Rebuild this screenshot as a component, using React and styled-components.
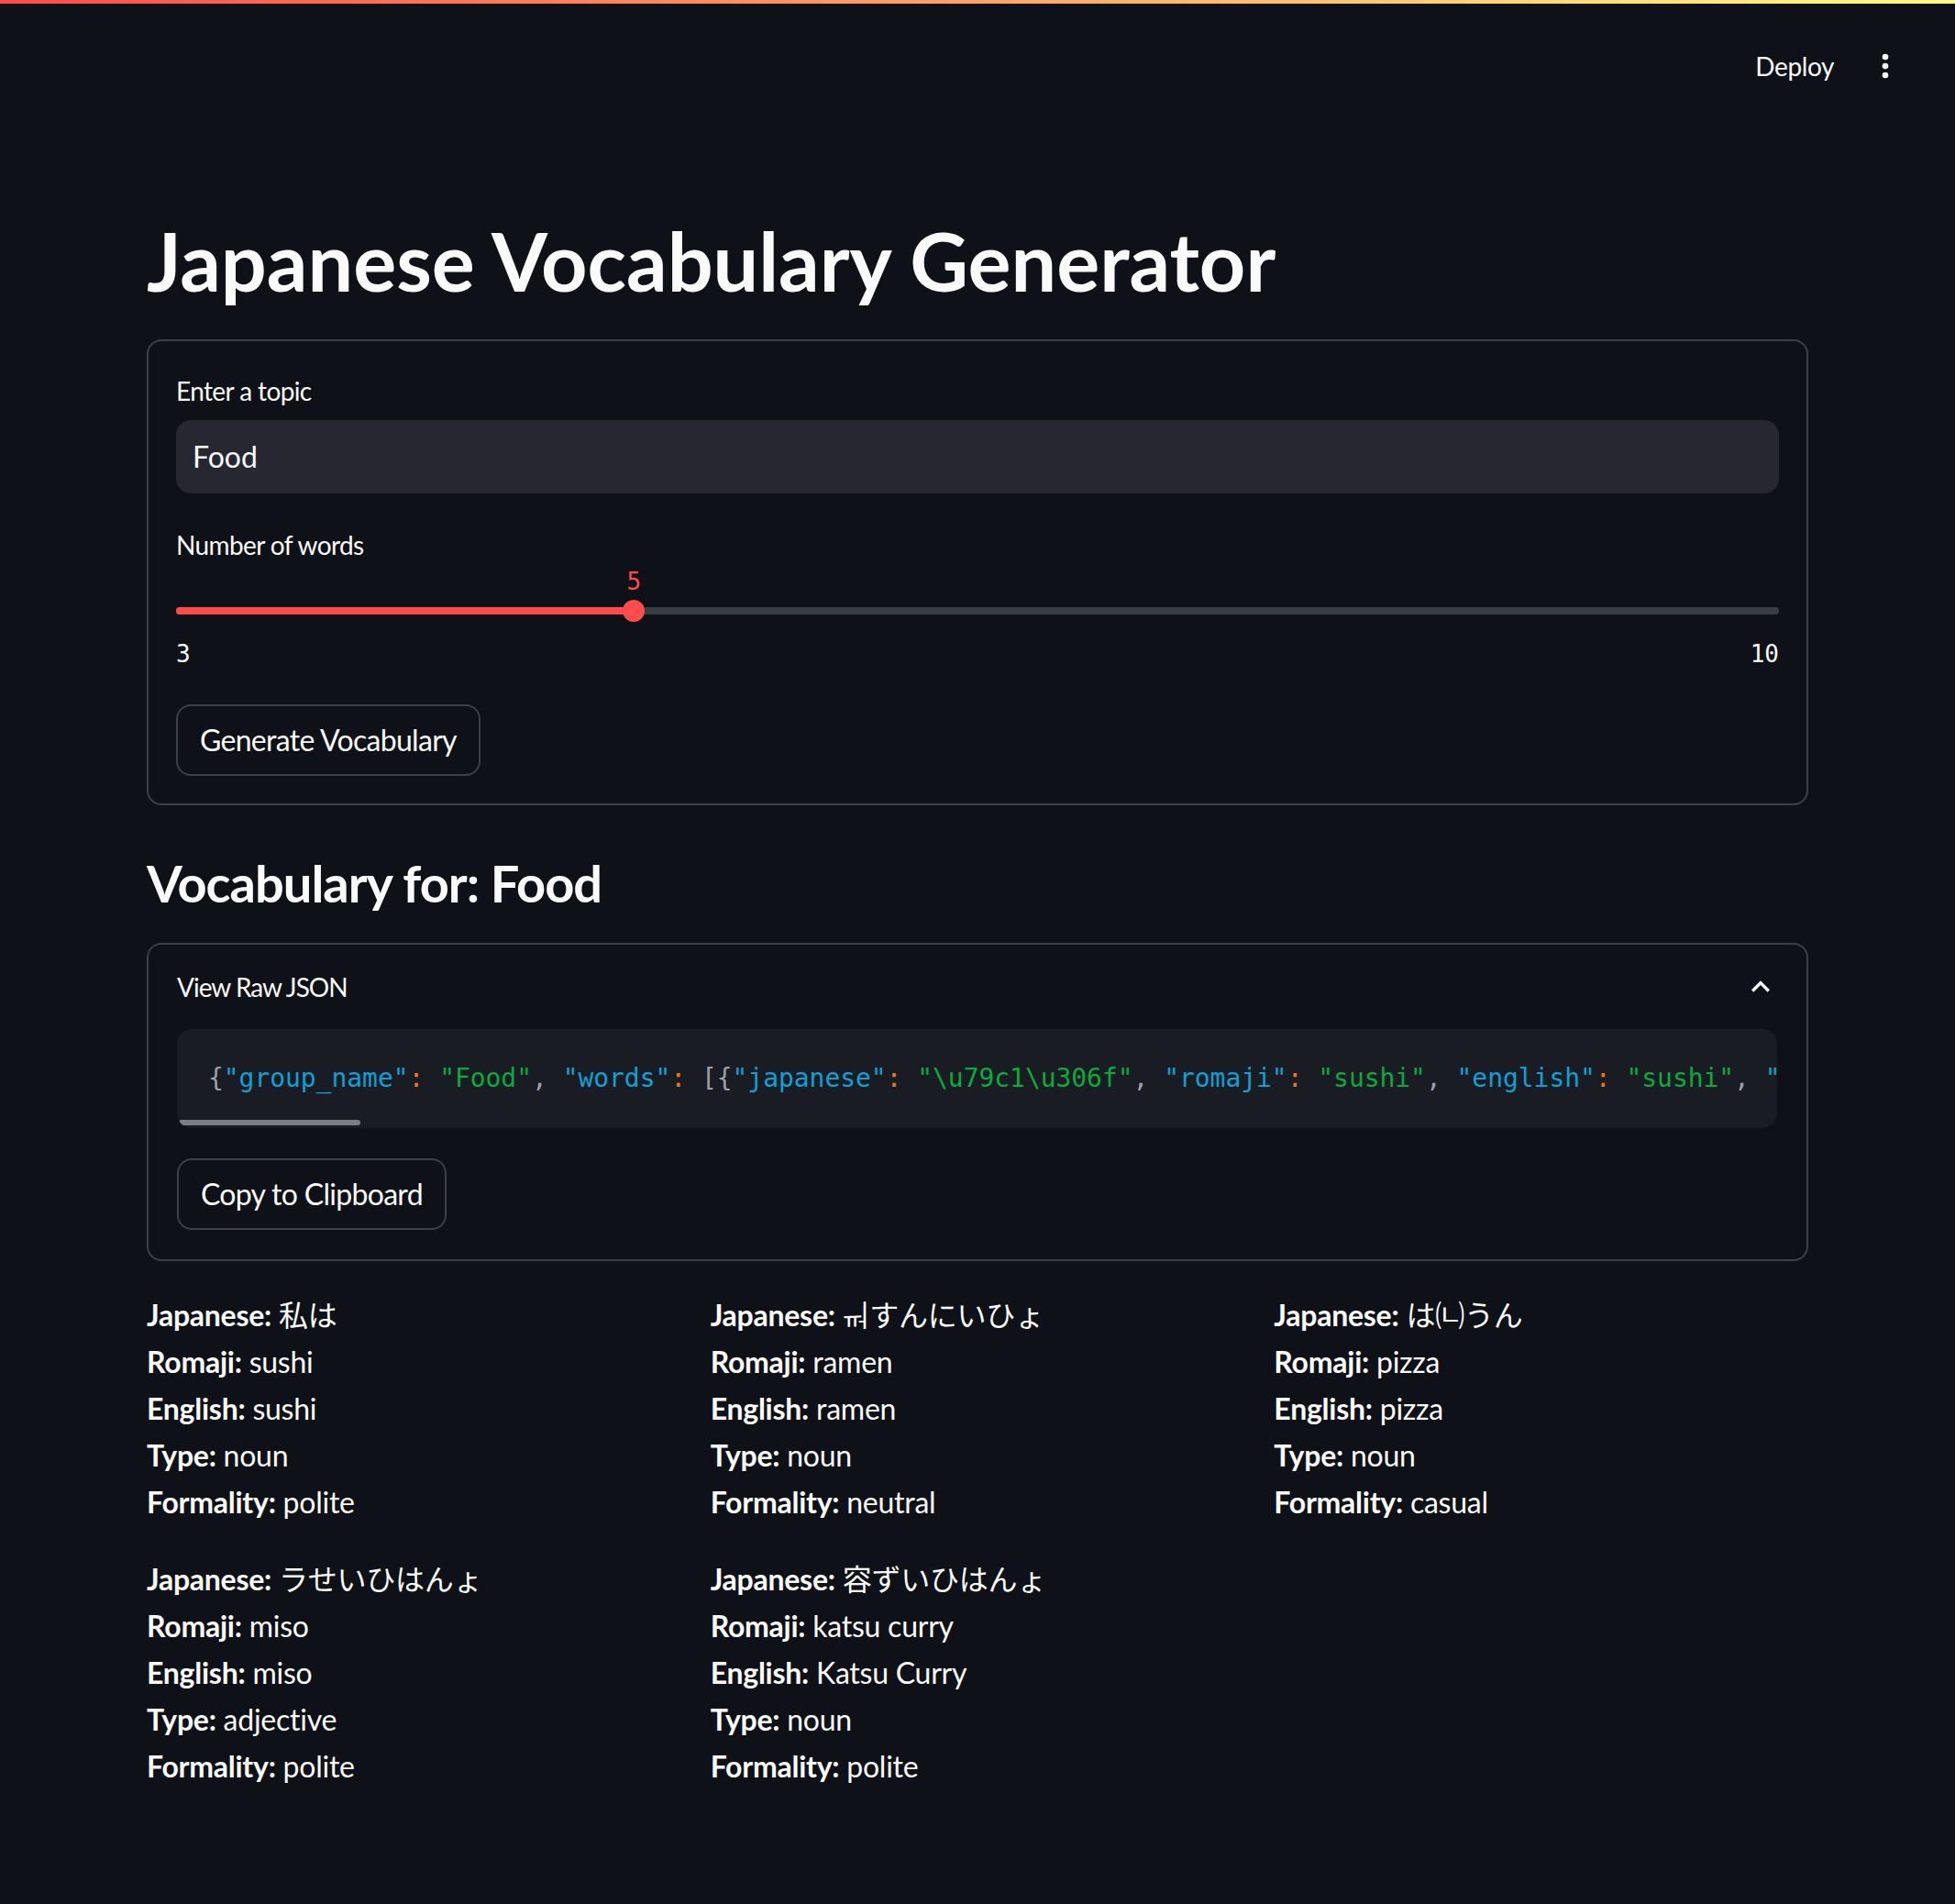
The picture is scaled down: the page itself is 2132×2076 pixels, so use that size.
import React from 'react'
import styled, { createGlobalStyle } from 'styled-components'

const GlobalStyle = createGlobalStyle`
  * { box-sizing: border-box; }
  html, body {
    margin: 0;
    padding: 0;
    background: #0e1117;
  }
  body {
    color: #fafafa;
    font-family: "Lato", "Noto Sans CJK JP", "Noto Sans CJK KR", sans-serif;
    -webkit-font-smoothing: antialiased;
  }
`

const vocab = {
  group_name: 'Food',
  words: [
    { japanese: '私は', romaji: 'sushi', english: 'sushi', type: 'noun', formality: 'polite' },
    { japanese: '\u115f\u118fすんにいひょ', romaji: 'ramen', english: 'ramen', type: 'noun', formality: 'neutral' },
    { japanese: 'は\u3201うん', romaji: 'pizza', english: 'pizza', type: 'noun', formality: 'casual' },
    { japanese: 'ラせいひはんょ', romaji: 'miso', english: 'miso', type: 'adjective', formality: 'polite' },
    { japanese: '容ずいひはんょ', romaji: 'katsu curry', english: 'Katsu Curry', type: 'noun', formality: 'polite' },
  ],
}

// python json.dumps style: ascii escapes, ", " and ": " separators
const pyEscape = (s) =>
  s.replace(/[^\x20-\x7e]/g, (ch) => '\\u' + ch.charCodeAt(0).toString(16).padStart(4, '0'))

const toTokens = (value, out) => {
  if (Array.isArray(value)) {
    out.push(['[', 'p'])
    value.forEach((v, i) => {
      if (i) out.push([', ', 'p'])
      toTokens(v, out)
    })
    out.push([']', 'p'])
  } else if (typeof value === 'object') {
    out.push(['{', 'p'])
    Object.entries(value).forEach(([k, v], i) => {
      if (i) out.push([', ', 'p'])
      out.push([`"${k}"`, 'k'])
      out.push([':', 'o'])
      out.push([' ', 'p'])
      toTokens(v, out)
    })
    out.push(['}', 'p'])
  } else {
    out.push([`"${pyEscape(String(value))}"`, 's'])
  }
  return out
}

// the raw json keeps the original single jamo, without the display filler
const rawVocab = {
  ...vocab,
  words: vocab.words.map((w) => ({ ...w, japanese: w.japanese.replace('\u115f', '') })),
}

const tokenColors = {
  p: '#9ca0ab',
  k: '#0ea0d6',
  s: '#09ab3b',
  o: '#f0761f',
}

const DecorationBar = styled.div`
  height: 4px;
  background: linear-gradient(90deg, #ff4b4b, #fffd80);
`

const Header = styled.header`
  height: 136px;
  display: flex;
  align-items: center;
  justify-content: flex-end;
  padding-right: 56px;
`

const DeployButton = styled.button`
  height: 64px;
  padding: 0 24px;
  margin-right: 12px;
  background: transparent;
  border: none;
  color: #fafafa;
  font-family: inherit;
  font-size: 28px;
  letter-spacing: -0.4px;
  cursor: pointer;
`

const IconButton = styled.button`
  width: 40px;
  height: 40px;
  padding: 0;
  display: flex;
  align-items: center;
  justify-content: center;
  background: transparent;
  border: none;
  color: #fafafa;
  cursor: pointer;
`

const Main = styled.main`
  padding: 52px 160px 120px;
`

const Title = styled.h1`
  margin: 0;
  padding: 40px 0 32px;
  font-size: 88px;
  line-height: 1.2;
  font-weight: 700;
`

const FormBox = styled.form`
  display: flex;
  flex-direction: column;
  align-items: flex-start;
  gap: 32px;
  padding: 30px;
  border: 2px solid rgba(250, 250, 250, 0.2);
  border-radius: 16px;
`

const Field = styled.div`
  width: 100%;
  display: flex;
  flex-direction: column;
`

const Label = styled.label`
  height: 48px;
  line-height: 48px;
  font-size: 28px;
  letter-spacing: -0.6px;
  margin-bottom: ${(p) => (p.$tight ? 0 : 8)}px;
`

const TextInput = styled.input`
  height: 80px;
  width: 100%;
  padding: 0 16px;
  border: 2px solid transparent;
  border-radius: 16px;
  background: #262730;
  color: #fafafa;
  font-family: inherit;
  font-size: 32px;
  outline: none;
`

const ValueRow = styled.div`
  position: relative;
  height: 32px;
`

const ThumbValue = styled.span`
  position: absolute;
  top: 0;
  transform: translateX(-50%);
  line-height: 32px;
  font-family: "DejaVu Sans Mono", monospace;
  font-size: 26px;
  color: #ff4b4b;
`

const TrackRow = styled.div`
  height: 32px;
  display: flex;
  align-items: center;
`

const Track = styled.div`
  position: relative;
  width: 100%;
  height: 8px;
  border-radius: 4px;
  background: #383c44;
`

const TrackFill = styled.div`
  height: 100%;
  border-radius: 4px;
  background: #ff4b4b;
`

const Thumb = styled.div`
  position: absolute;
  top: 50%;
  width: 24px;
  height: 24px;
  border-radius: 50%;
  background: #ff4b4b;
  transform: translate(-50%, -50%);
`

const TickBar = styled.div`
  margin-top: 9px;
  height: 45px;
  display: flex;
  align-items: center;
  justify-content: space-between;
  font-family: "DejaVu Sans Mono", monospace;
  font-size: 26px;
`

const Button = styled.button`
  height: 78px;
  padding: 0 24px;
  border: 2px solid rgba(250, 250, 250, 0.2);
  border-radius: 16px;
  background: #0e1117;
  color: #fafafa;
  font-family: inherit;
  font-size: 32px;
  letter-spacing: -0.7px;
  cursor: pointer;
`

const SubHeading = styled.h3`
  margin: 32px 0 0;
  padding: 19px 0 32px;
  font-size: 56px;
  line-height: 67px;
  font-weight: 700;
  letter-spacing: -1px;
`

const Expander = styled.details`
  border: 2px solid rgba(250, 250, 250, 0.2);
  border-radius: 16px;
`

const Summary = styled.summary`
  height: 92px;
  padding: 0 30px 0 31px;
  display: flex;
  align-items: center;
  justify-content: space-between;
  list-style: none;
  font-size: 28px;
  letter-spacing: -1px;
  cursor: pointer;
  &::-webkit-details-marker { display: none; }
`

const ExpanderBody = styled.div`
  display: flex;
  flex-direction: column;
  align-items: flex-start;
  gap: 33px;
  padding: 0 32px 32px 31px;
`

const CodeBlock = styled.pre`
  position: relative;
  width: 100%;
  height: 108px;
  margin: 0;
  padding: 0 34px;
  overflow: hidden;
  border-radius: 16px;
  background: #1a1c24;
  font-family: "DejaVu Sans Mono", monospace;
  font-size: 28px;
  letter-spacing: -0.05px;
  line-height: 108px;
  white-space: pre;
`

const Token = styled.span`
  color: ${(p) => tokenColors[p.$kind]};
`

const ScrollThumb = styled.div`
  position: absolute;
  left: 2px;
  bottom: 3px;
  width: 198px;
  height: 6px;
  border-radius: 3px;
  background: #7b7d84;
`

const WordGrid = styled.div`
  margin-top: 33px;
  display: grid;
  grid-template-columns: repeat(3, 1fr);
  gap: 32px;
  align-items: start;
`

const WordColumn = styled.div`
  display: flex;
  flex-direction: column;
  gap: 32px;
`

const WordCard = styled.div`
  font-size: 32px;
  line-height: 51.2px;
  letter-spacing: -0.25px;
`

const Key = styled.strong`
  font-weight: 700;
`

function KebabIcon() {
  return (
    <svg width="40" height="40" viewBox="0 0 24 24" fill="currentColor">
      <circle cx="12" cy="6" r="2" />
      <circle cx="12" cy="12" r="2" />
      <circle cx="12" cy="18" r="2" />
    </svg>
  )
}

function ChevronUp() {
  return (
    <svg width="40" height="40" viewBox="0 0 24 24" fill="currentColor">
      <path d="M7.41 15.41 12 10.83l4.59 4.58L18 14l-6-6-6 6z" />
    </svg>
  )
}

function NumberSlider({ label, min, max, value }) {
  const pct = ((value - min) / (max - min)) * 100
  return (
    <Field>
      <Label $tight>{label}</Label>
      <ValueRow>
        <ThumbValue style={{ left: `${pct}%` }}>{value}</ThumbValue>
      </ValueRow>
      <TrackRow>
        <Track>
          <TrackFill style={{ width: `${pct}%` }} />
          <Thumb style={{ left: `${pct}%` }} />
        </Track>
      </TrackRow>
      <TickBar>
        <span>{min}</span>
        <span>{max}</span>
      </TickBar>
    </Field>
  )
}

function WordEntry({ word }) {
  return (
    <WordCard>
      <div><Key>Japanese:</Key> {word.japanese}</div>
      <div><Key>Romaji:</Key> {word.romaji}</div>
      <div><Key>English:</Key> {word.english}</div>
      <div><Key>Type:</Key> {word.type}</div>
      <div><Key>Formality:</Key> {word.formality}</div>
    </WordCard>
  )
}

export default function App() {
  const tokens = toTokens(rawVocab, [])
  const columns = [[], [], []]
  vocab.words.forEach((w, i) => columns[i % 3].push(w))

  return (
    <>
      <GlobalStyle />
      <DecorationBar />
      <Header>
        <DeployButton>Deploy</DeployButton>
        <IconButton aria-label="menu">
          <KebabIcon />
        </IconButton>
      </Header>
      <Main>
        <Title>Japanese Vocabulary Generator</Title>
        <FormBox onSubmit={(e) => e.preventDefault()}>
          <Field>
            <Label>Enter a topic</Label>
            <TextInput defaultValue="Food" />
          </Field>
          <NumberSlider label="Number of words" min={3} max={10} value={5} />
          <Button type="submit">Generate Vocabulary</Button>
        </FormBox>

        <SubHeading>Vocabulary for: {vocab.group_name}</SubHeading>

        <Expander open>
          <Summary>
            <span>View Raw JSON</span>
            <ChevronUp />
          </Summary>
          <ExpanderBody>
            <CodeBlock>
              {tokens.map(([t, kind], i) => (
                <Token key={i} $kind={kind}>{t}</Token>
              ))}
              <ScrollThumb />
            </CodeBlock>
            <Button type="button">Copy to Clipboard</Button>
          </ExpanderBody>
        </Expander>

        <WordGrid>
          {columns.map((col, ci) => (
            <WordColumn key={ci}>
              {col.map((w) => (
                <WordEntry key={w.romaji} word={w} />
              ))}
            </WordColumn>
          ))}
        </WordGrid>
      </Main>
    </>
  )
}
